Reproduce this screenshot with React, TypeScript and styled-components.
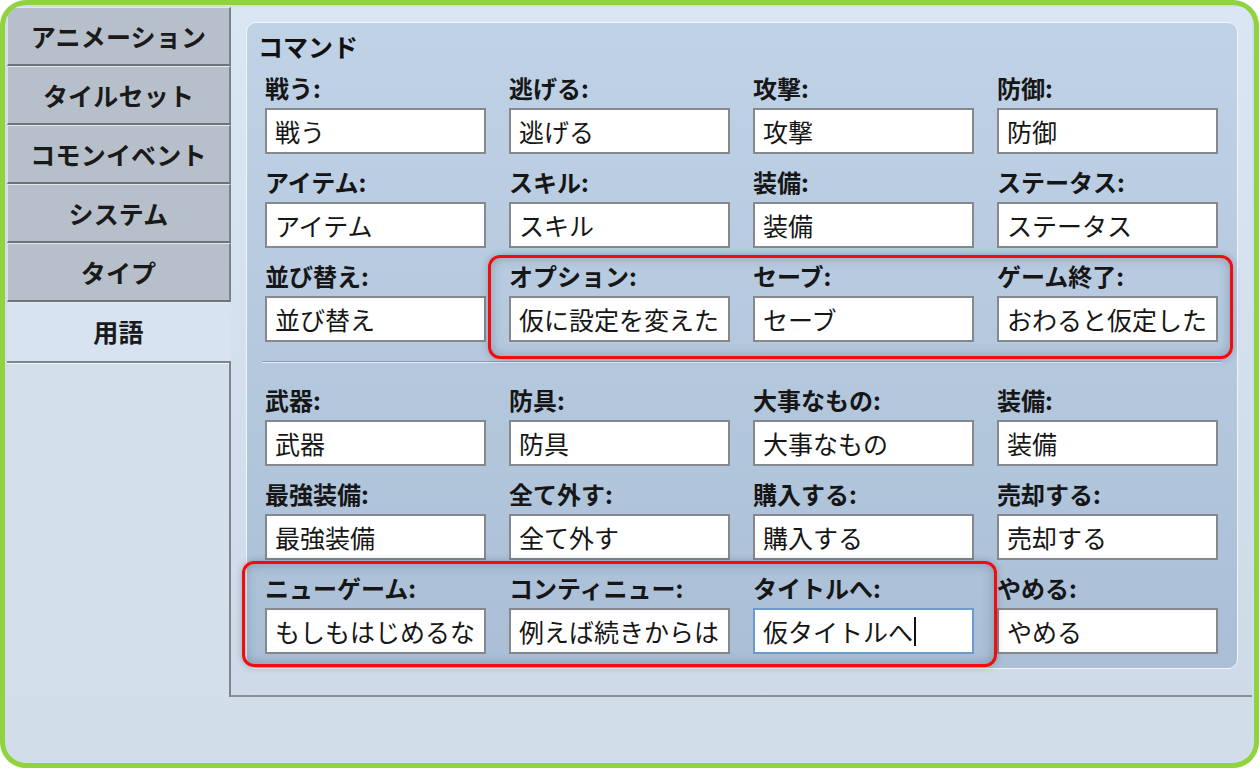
import React from "react";
import styled, { createGlobalStyle } from "styled-components";

const Global = createGlobalStyle`
  html, body { margin: 0; padding: 0; background: #ffffff; }
  body { font-family: "Noto Sans CJK JP", "Noto Sans", sans-serif; }
  * { box-sizing: border-box; }
`;

const Window = styled.div`
  width: 1259px;
  height: 768px;
  border: 5px solid #8fd43f;
  border-radius: 26px;
  background: #d1dde9;
  padding: 2px;
  display: flex;
  flex-direction: column;
  overflow: hidden;
`;

const Body = styled.div`
  display: flex;
  height: 690px;
`;

const Sidebar = styled.div`
  width: 224px;
  display: flex;
  flex-direction: column;
`;

const Tab = styled.div<{ $active?: boolean }>`
  height: 59px;
  display: flex;
  align-items: center;
  justify-content: center;
  font-size: 25px;
  font-weight: 700;
  color: #1a1a1a;
  letter-spacing: 0.2px;
  background: ${(p) => (p.$active ? "#d7e3f0" : "#b7c0ca")};
  border-top: 1px solid ${(p) => (p.$active ? "#e3ebf4" : "#e4e8ec")};
  border-left: 1px solid ${(p) => (p.$active ? "#d7e3f0" : "#dde2e7")};
  border-bottom: 2px solid ${(p) => (p.$active ? "#d7e3f0" : "#6d737a")};
  border-right: 2px solid ${(p) => (p.$active ? "#d7e3f0" : "#7b8189")};
`;

const Filler = styled.div`
  flex: 1;
  background: #d3dfeb;
  border-top: 2px solid #7e858c;
  border-right: 2px solid #7e858c;
  box-shadow: inset 0 1px 0 #f4f7fa;
`;

const Panel = styled.div`
  flex: 1;
  background: linear-gradient(#dbe6f4, #cedae7);
  border-bottom: 2px solid #8a9097;
  padding: 15px 14px 26px 15px;
`;

const GroupBox = styled.div`
  position: relative;
  border: 1px solid #f0f5fa;
  border-radius: 10px;
  background: linear-gradient(#c0d2e6, #aabfd6);
  padding: 9px 19px 14px 18px;
`;

const Heading = styled.div`
  font-size: 25px;
  font-weight: 700;
  line-height: 28px;
  color: #111;
  margin: 0 0 16px -7px;
`;

const Grid = styled.div`
  display: grid;
  grid-template-columns: repeat(4, 221px);
  column-gap: 23px;
  row-gap: 16px;
`;

const Cell = styled.div`
  display: flex;
  flex-direction: column;
  gap: 8px;
`;

const Label = styled.div`
  font-size: 24px;
  font-weight: 700;
  line-height: 24px;
  color: #161616;
  white-space: nowrap;
`;

const Field = styled.div<{ $focused?: boolean }>`
  height: 46px;
  background: #ffffff;
  border: 2px solid ${(p) => (p.$focused ? "#6e9bcb" : "#85898e")};
  padding-left: 8px;
  display: flex;
  align-items: center;
  font-size: 25px;
  color: #161616;
  white-space: nowrap;
  overflow: hidden;
`;

const Caret = styled.span`
  display: inline-block;
  width: 1.5px;
  height: 29px;
  background: #111;
  margin-left: 1px;
`;

const Separator = styled.div`
  height: 1px;
  background: #8c9aab;
  box-shadow: 0 1px 0 #e3ebf4;
  margin: 19px -3px 26px -3px;
`;

const Highlight = styled.div<{ $l: number; $t: number; $w: number; $h: number }>`
  position: absolute;
  left: ${(p) => p.$l}px;
  top: ${(p) => p.$t}px;
  width: ${(p) => p.$w}px;
  height: ${(p) => p.$h}px;
  border: 3px solid #f20c0c;
  border-radius: 12px;
  box-shadow: inset 0 0 12px rgba(40, 60, 90, 0.32), 0 0 7px rgba(30, 40, 60, 0.28);
  pointer-events: none;
`;

const FooterArea = styled.div`
  flex: 1;
`;

type Item = { label: string; value: string; focused?: boolean };

const section1: Item[] = [
  { label: "戦う:", value: "戦う" },
  { label: "逃げる:", value: "逃げる" },
  { label: "攻撃:", value: "攻撃" },
  { label: "防御:", value: "防御" },
  { label: "アイテム:", value: "アイテム" },
  { label: "スキル:", value: "スキル" },
  { label: "装備:", value: "装備" },
  { label: "ステータス:", value: "ステータス" },
  { label: "並び替え:", value: "並び替え" },
  { label: "オプション:", value: "仮に設定を変えた" },
  { label: "セーブ:", value: "セーブ" },
  { label: "ゲーム終了:", value: "おわると仮定した" },
];

const section2: Item[] = [
  { label: "武器:", value: "武器" },
  { label: "防具:", value: "防具" },
  { label: "大事なもの:", value: "大事なもの" },
  { label: "装備:", value: "装備" },
  { label: "最強装備:", value: "最強装備" },
  { label: "全て外す:", value: "全て外す" },
  { label: "購入する:", value: "購入する" },
  { label: "売却する:", value: "売却する" },
  { label: "ニューゲーム:", value: "もしもはじめるな" },
  { label: "コンティニュー:", value: "例えば続きからは" },
  { label: "タイトルへ:", value: "仮タイトルへ", focused: true },
  { label: "やめる:", value: "やめる" },
];

const tabs = ["アニメーション", "タイルセット", "コモンイベント", "システム", "タイプ", "用語"];

function Fields({ items }: { items: Item[] }) {
  return (
    <Grid>
      {items.map((it, i) => (
        <Cell key={i}>
          <Label>{it.label}</Label>
          <Field $focused={it.focused}>
            {it.value}
            {it.focused && <Caret />}
          </Field>
        </Cell>
      ))}
    </Grid>
  );
}

export default function App() {
  return (
    <>
      <Global />
      <Window>
        <Body>
          <Sidebar>
            {tabs.map((t) => (
              <Tab key={t} $active={t === "用語"}>
                {t}
              </Tab>
            ))}
            <Filler />
          </Sidebar>
          <Panel>
            <GroupBox>
              <Heading>コマンド</Heading>
              <Fields items={section1} />
              <Separator />
              <Fields items={section2} />
              <Highlight $l={241} $t={232} $w={745} $h={104} />
              <Highlight $l={-5} $t={538} $w={755} $h={106} />
            </GroupBox>
          </Panel>
        </Body>
        <FooterArea />
      </Window>
    </>
  );
}
